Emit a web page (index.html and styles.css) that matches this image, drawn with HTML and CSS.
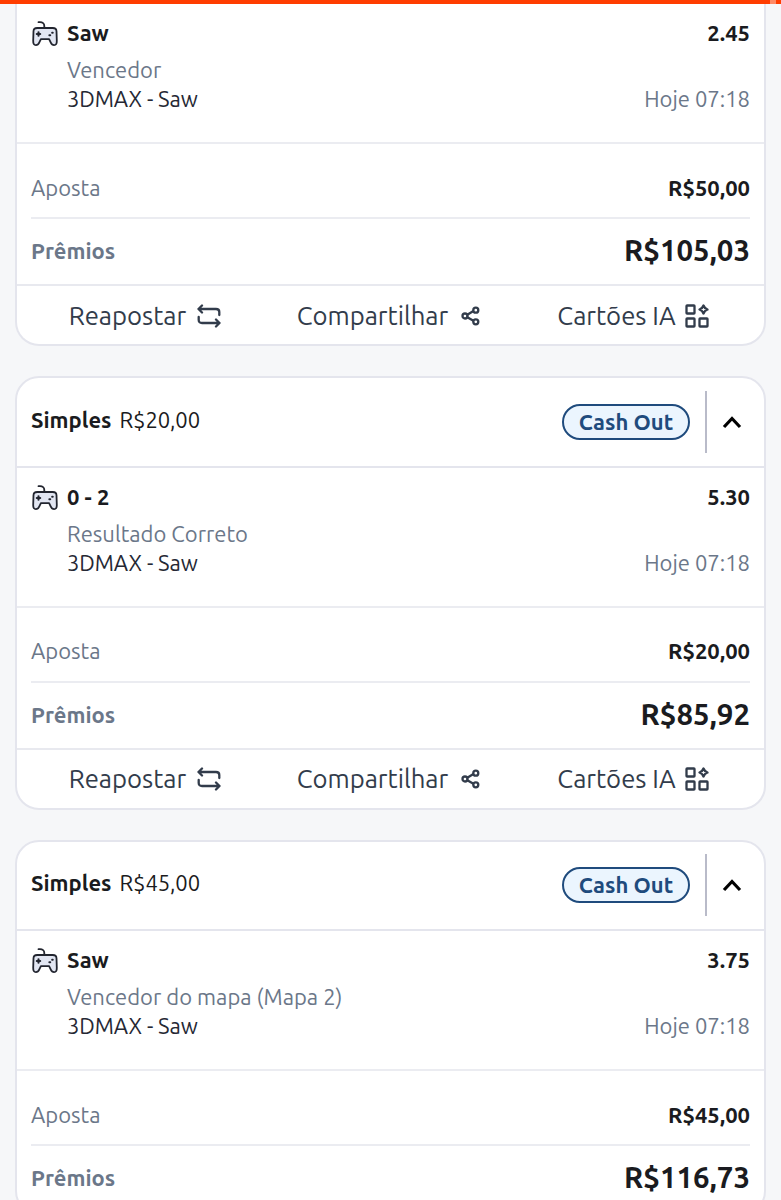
FILE: index.html
```
<!DOCTYPE html>
<html lang="pt-BR">
<head>
  <meta charset="UTF-8">
  <title>Minhas Apostas</title>
  <link rel="stylesheet" href="styles.css">
</head>
<body>

  <!-- Ícones -->
  <svg class="sprite" width="0" height="0">
    <symbol id="icon-game" viewBox="0 0 26 26">
      <path d="M6.500 1.200h1.500c2.500 0 4.300 1.500 4.300 3.700v2" fill="none" />
      <path d="M5.200 7h15.600c2.400 0 3.600 1.200 3.700 3.300l.3 9.500c.1 3-.9 4.400-2.700 4.400-1.700 0-2.600-.8-3.300-2.500l-1.700-3.600H8.900l-1.700 3.600c-.7 1.700-1.600 2.500-3.300 2.500-1.800 0-2.800-1.400-2.700-4.400l.3-9.500C1.600 8.200 2.800 7 5.200 7z" fill="#e2e6f2" />
      <path d="M4.800 13h3.400M6.500 11.300v3.400M17.400 14.300h.8M20.200 11.800h.5" fill="none" stroke-width="2.100" />
    </symbol>
    <symbol id="icon-repeat" viewBox="0 0 24 24">
      <path d="M5 1.500 1.500 5 5 8.500M1.500 5h17.500c2.200 0 3.300 1 3.300 3v3M19 15.500l3.500 3.500-3.500 3.500M22.500 19H5c-2.200 0-3.300-1-3.300-3v-3" />
    </symbol>
    <symbol id="icon-share" viewBox="0 0 20 20">
      <path d="M6.300 8.700 12 5.200M6.300 11.200l5.700 3.400" />
      <circle cx="4" cy="10" r="2.500" />
      <circle cx="14.800" cy="4.200" r="2.500" />
      <circle cx="14.800" cy="15.800" r="2.500" />
    </symbol>
    <symbol id="icon-cards" viewBox="0 0 24 24">
      <rect x="1.500" y="1.500" width="8" height="8" rx=".6" />
      <rect x="1.500" y="14.500" width="8" height="8" rx=".6" />
      <rect x="14.500" y="14.500" width="8" height="8" rx=".6" />
      <path d="M18.500 1.500c.8 2.300 1.700 3.200 4 4-2.300.8-3.200 1.700-4 4-.8-2.300-1.700-3.200-4-4 2.300-.8 3.200-1.700 4-4z" />
    </symbol>
    <symbol id="icon-up" viewBox="0 0 20 14">
      <path d="M2 12l8-8.500 8 8.500" />
    </symbol>
  </svg>

  <div class="top-bar"><span class="top-bar-mark"></span></div>

  <div class="bets">
    <div class="bet bet-cut">
      <div class="event">
        <svg class="game"><use href="#icon-game" /></svg>
        <div class="event-info">
          <div class="row pick"><b class="pick-name">Saw</b><b class="odd">2.45</b></div>
          <div class="market">Vencedor</div>
          <div class="row match"><span class="teams">3DMAX - Saw</span><span class="date">Hoje 07:18</span></div>
        </div>
      </div>
      <div class="totals">
        <div class="row stake"><span class="stake-label">Aposta</span><b class="stake-value">R$50,00</b></div>
        <div class="row prize"><b class="prize-label">Prêmios</b><b class="prize-value">R$105,03</b></div>
      </div>
      <div class="actions">
        <div class="action"><span class="rebet">Reapostar</span><svg class="icon"><use href="#icon-repeat" /></svg></div>
        <div class="action action-share"><span class="share">Compartilhar</span><svg class="icon icon-small"><use href="#icon-share" /></svg></div>
        <div class="action action-cards"><span class="cards">Cartões IA</span><svg class="icon"><use href="#icon-cards" /></svg></div>
      </div>
    </div>

    <div class="bet">
      <div class="bet-header">
        <div class="bet-title"><b class="bet-type">Simples</b><span class="bet-value">R$20,00</span></div>
        <div class="cash-out"><span>Cash Out</span></div>
        <div class="toggle"><svg class="chevron"><use href="#icon-up" /></svg></div>
      </div>
      <div class="event">
        <svg class="game"><use href="#icon-game" /></svg>
        <div class="event-info">
          <div class="row pick"><b class="pick-name">0 - 2</b><b class="odd">5.30</b></div>
          <div class="market">Resultado Correto</div>
          <div class="row match"><span class="teams">3DMAX - Saw</span><span class="date">Hoje 07:18</span></div>
        </div>
      </div>
      <div class="totals">
        <div class="row stake"><span class="stake-label">Aposta</span><b class="stake-value">R$20,00</b></div>
        <div class="row prize"><b class="prize-label">Prêmios</b><b class="prize-value">R$85,92</b></div>
      </div>
      <div class="actions">
        <div class="action"><span class="rebet">Reapostar</span><svg class="icon"><use href="#icon-repeat" /></svg></div>
        <div class="action action-share"><span class="share">Compartilhar</span><svg class="icon icon-small"><use href="#icon-share" /></svg></div>
        <div class="action action-cards"><span class="cards">Cartões IA</span><svg class="icon"><use href="#icon-cards" /></svg></div>
      </div>
    </div>

    <div class="bet">
      <div class="bet-header">
        <div class="bet-title"><b class="bet-type">Simples</b><span class="bet-value">R$45,00</span></div>
        <div class="cash-out"><span>Cash Out</span></div>
        <div class="toggle"><svg class="chevron"><use href="#icon-up" /></svg></div>
      </div>
      <div class="event">
        <svg class="game"><use href="#icon-game" /></svg>
        <div class="event-info">
          <div class="row pick"><b class="pick-name">Saw</b><b class="odd">3.75</b></div>
          <div class="market">Vencedor do mapa (Mapa 2)</div>
          <div class="row match"><span class="teams">3DMAX - Saw</span><span class="date">Hoje 07:18</span></div>
        </div>
      </div>
      <div class="totals">
        <div class="row stake"><span class="stake-label">Aposta</span><b class="stake-value">R$45,00</b></div>
        <div class="row prize"><b class="prize-label">Prêmios</b><b class="prize-value">R$116,73</b></div>
      </div>
    </div>
  </div>

</body>
</html>
```
FILE: styles.css
```
* {
  box-sizing: border-box;
}

body {
  margin: 0;
  height: 1200px;
  overflow: hidden;
  background-color: #f6f7f9;
  color: #1a1b20;
  font-family: Ubuntu, 'Noto Sans', sans-serif;
  font-size: 22px;
  line-height: 30px;
  white-space: nowrap;
}

.sprite {
  display: block;
}

.top-bar {
  display: flex;
  justify-content: flex-end;
  height: 4px;
  padding-right: 5px;
  background-color: #ff3d00;
}

.top-bar-mark {
  width: 6px;
  background-color: #ff8a66;
}

.bets {
  display: flex;
  flex-direction: column;
  gap: 30px;
  padding: 0 15px;
}

.bet {
  flex-shrink: 0;
  background-color: #fff;
  border: 2px solid #e4e5ed;
  border-radius: 24px;
}

.bet-cut {
  border-top: none;
  border-radius: 0 0 24px 24px;
}

.row {
  display: flex;
  justify-content: space-between;
  align-items: center;
}

.bet-header {
  display: flex;
  align-items: center;
  height: 89.5px;
  padding: 0 14px;
  border-bottom: 2px solid #e4e5ed;
}

.bet-title {
  display: flex;
  gap: 8px;
  flex: 1;
  padding-bottom: 4px;
}

.bet-value {
  letter-spacing: -0.1px;
}

.cash-out {
  width: 128px;
  height: 36px;
  margin-right: 15px;
  border: 2px solid #1f4b7d;
  border-radius: 18px;
  background-color: #ebf5fe;
  color: #1f4b7d;
  font-weight: bold;
  line-height: 32px;
  text-align: center;
}

.toggle {
  display: flex;
  align-items: center;
  justify-content: center;
  width: 45px;
  height: 62px;
  padding-left: 7px;
  border-left: 2px solid #b9bbc9;
}

.chevron {
  width: 20px;
  height: 14px;
  fill: none;
  stroke: #000;
  stroke-width: 3.2;
}

.event {
  display: flex;
  height: 140px;
  padding: 14px 14px 0 15px;
  border-bottom: 2px solid #ebecf1;
}

.game {
  width: 26px;
  height: 26px;
  margin: 3px 9px 0 0;
  stroke: #22252f;
  stroke-width: 1.800;
  stroke-linecap: round;
  stroke-linejoin: round;
}

.event-info {
  flex: 1;
}

.pick {
  margin-bottom: 7px;
}

.market {
  height: 29px;
  color: #6b7789;
}

.teams {
  color: #252834;
  letter-spacing: -0.1px;
}

.date {
  color: #6b7789;
}

.totals {
  height: 142px;
  padding: 14px 14px 0;
  border-bottom: 2px solid #e8e9ef;
}

.stake {
  height: 61px;
  border-bottom: 2px solid #ebecf1;
}

.stake-label,
.prize-label {
  color: #6b7789;
}

.prize {
  height: 64px;
}

.prize-value {
  font-size: 29.4px;
}

.actions {
  display: grid;
  grid-template-columns: repeat(3, 1fr);
  height: 58px;
  padding: 1px 9px 0 6px;
}

.action {
  display: flex;
  align-items: center;
  justify-content: center;
  gap: 11px;
  color: #323c4b;
  font-size: 25.7px;
}

.action-share {
  gap: 13px;
}

.action-cards {
  gap: 9px;
}

.icon {
  width: 24px;
  height: 24px;
  fill: none;
  stroke: #323c4b;
  stroke-width: 2.300;
  stroke-linecap: round;
  stroke-linejoin: round;
}

.icon-small {
  width: 20px;
  height: 20px;
}
```
